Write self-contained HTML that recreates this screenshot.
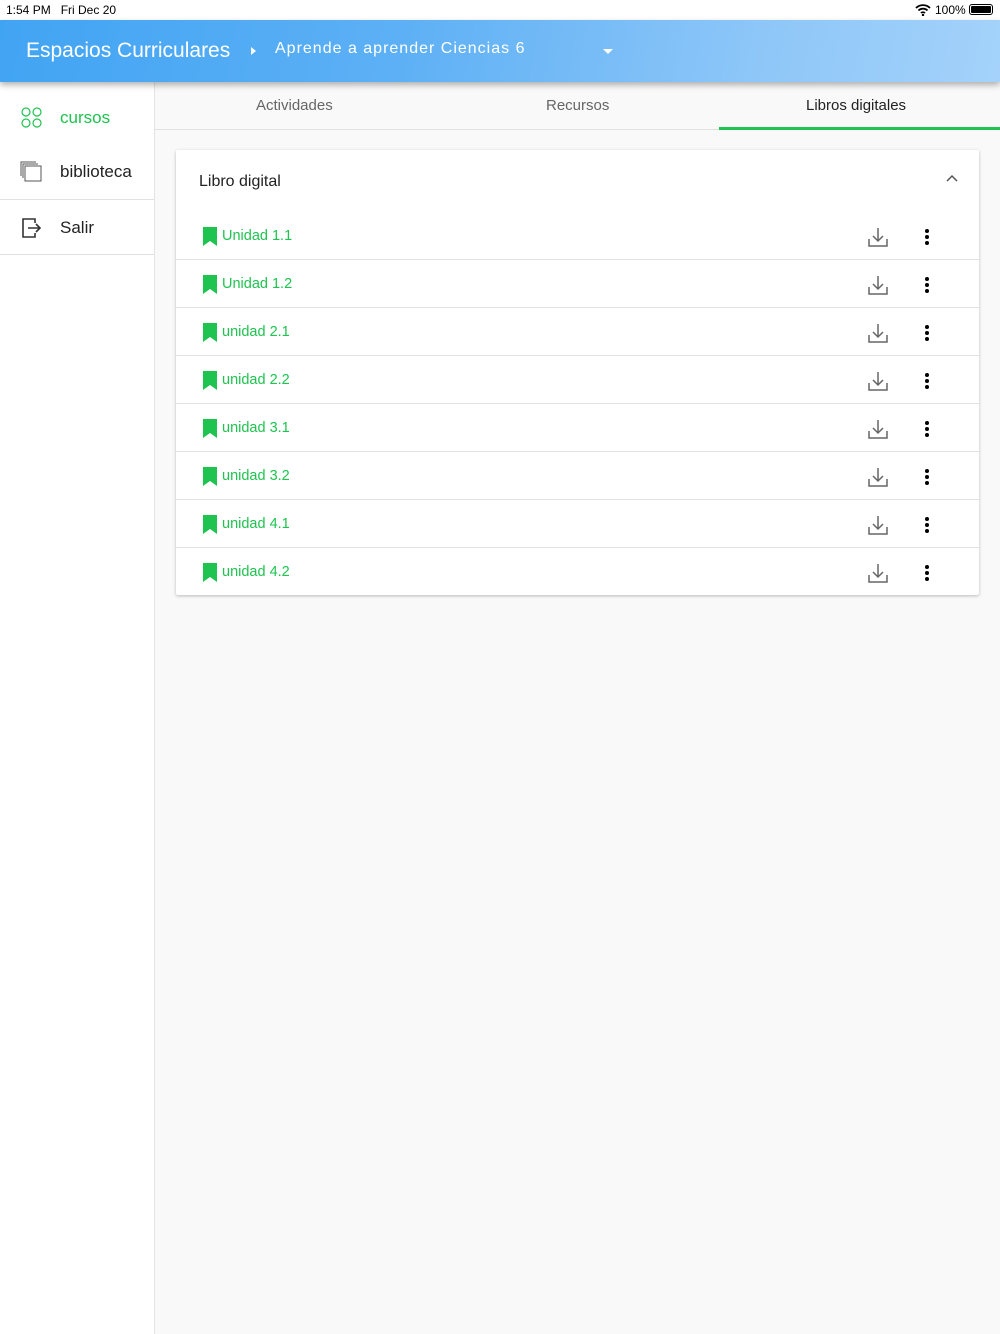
<!DOCTYPE html>
<html><head><meta charset="utf-8"><style>
*{margin:0;padding:0;box-sizing:border-box}
body{width:1000px;height:1334px;background:#f9f9f9;font-family:"Liberation Sans",sans-serif;position:relative;overflow:hidden}
.status{position:absolute;top:0;left:0;width:1000px;height:20px;background:#fff;font-size:12px;color:#000}
.hdr{position:absolute;top:20px;left:0;width:1000px;height:62px;background:linear-gradient(100deg,#41a4f3 0%,#5db0f5 40%,#8dc6f8 75%,#a4d2fa 100%);box-shadow:0 3px 6px rgba(0,0,0,.3);z-index:3;color:#fff}
.side{position:absolute;top:82px;left:0;width:155px;height:1252px;background:#fff;border-right:1px solid #e4e4e4}
.item{position:absolute;left:0;width:154px;height:55px;font-size:17px;color:#222}
.item span{position:absolute;left:60px;top:18px}
.tabs{position:absolute;top:82px;left:155px;width:845px;height:48px;border-bottom:1px solid #e0e0e0;background:#f9f9f9}
.tab{position:absolute;top:15px;font-size:15px;color:#666}
.card{position:absolute;top:150px;left:176px;width:803px;height:445px;background:#fff;box-shadow:0 1px 3px rgba(0,0,0,.25);border-radius:2px}
.row{position:absolute;left:0;width:803px;height:48px;border-bottom:1px solid #e2e2e2}
.row .t{position:absolute;left:46px;top:16px;font-size:14.5px;color:#1ec44f}
.bm{position:absolute;left:27px;top:15px}
.dl{position:absolute;left:692px;top:15px}
.dots{position:absolute;left:748px;top:16px}
</style></head><body>
<div class="status"><span style="position:absolute;left:6px;top:3px">1:54 PM&nbsp;&nbsp;&nbsp;Fri Dec 20</span>
<span style="position:absolute;left:935px;top:3px">100%</span>
<svg style="position:absolute;left:915px;top:4px" width="16" height="12" viewBox="0 0 16 12"><path d="M1 4a10 10 0 0 1 14 0M3.5 6.5a6.5 6.5 0 0 1 9 0M6 9a3 3 0 0 1 4 0" stroke="#000" stroke-width="1.8" fill="none"/><circle cx="8" cy="11" r="1.2"/></svg>
<div style="position:absolute;left:969px;top:4px;width:24px;height:11px;border:1px solid #000;border-radius:3px;padding:1px"><div style="background:#000;width:100%;height:100%;border-radius:1px"></div></div></div>
<div class="hdr">
<span style="position:absolute;left:26px;top:19px;font-size:21px">Espacios Curriculares</span>
<span style="position:absolute;left:251px;top:27px;width:0;height:0;border-top:4px solid transparent;border-bottom:4px solid transparent;border-left:5px solid #fff"></span>
<span style="position:absolute;left:275px;top:20px;font-size:16px;letter-spacing:1px">Aprende a aprender Ciencias 6</span>
<span style="position:absolute;left:603px;top:29px;width:0;height:0;border-left:5px solid transparent;border-right:5px solid transparent;border-top:5px solid #fff"></span>
</div>
<div class="side">
<div class="item" style="top:8px"><svg style="position:absolute;left:21px;top:17px" width="22" height="22"><g fill="none" stroke="#1ec44f" stroke-width="1.2"><circle cx="5" cy="5" r="4"/><circle cx="16" cy="5" r="4"/><circle cx="5" cy="16" r="4"/><circle cx="16" cy="16" r="4"/></g></svg><span style="color:#1ec44f">cursos</span></div>
<div class="item" style="top:62px"><svg style="position:absolute;left:20px;top:16px" width="24" height="24"><g fill="none" stroke="#555" stroke-width="1"><rect x="5" y="6" width="16" height="15"/><path d="M3 18V4h15M1 16V2h15"/></g></svg><span>biblioteca</span></div>
<div class="item" style="top:117px;border-top:1px solid #e2e2e2;border-bottom:1px solid #e2e2e2;height:56px"><svg style="position:absolute;left:21px;top:17px" width="22" height="22"><g fill="none" stroke="#333" stroke-width="1.6"><path d="M14 6V2H2v18h12v-4"/><path d="M7 11h12M15 7l4 4-4 4"/></g></svg><span>Salir</span></div>
</div>
<div class="tabs">
<span class="tab" style="left:101px">Actividades</span>
<span class="tab" style="left:391px">Recursos</span>
<span class="tab" style="left:651px;color:#222">Libros digitales</span>
<div style="position:absolute;left:564px;top:45px;width:281px;height:3px;background:#1ec44f"></div>
</div>
<div class="card">
<span style="position:absolute;left:23px;top:23px;font-size:16px;color:#222">Libro digital</span>
<svg style="position:absolute;left:770px;top:24px" width="12" height="8"><path d="M1 7l5-5 5 5" stroke="#555" stroke-width="1.5" fill="none"/></svg>
</div>
<div class="card" style="background:transparent;box-shadow:none">
<div class="row" style="top:62px"><svg class="bm" width="14" height="19"><path d="M0 0h14v19l-7-5-7 5z" fill="#1ec44f"/></svg><span class="t">Unidad 1.1</span><svg class="dl" width="20" height="20"><g fill="none" stroke="#666" stroke-width="1.5"><path d="M1 12v7h18v-7M10 1v13M5 9l5 5 5-5"/></g></svg><svg class="dots" width="6" height="18"><circle cx="3" cy="3" r="2"/><circle cx="3" cy="9" r="2"/><circle cx="3" cy="15" r="2"/></svg></div>
<div class="row" style="top:110px"><svg class="bm" width="14" height="19"><path d="M0 0h14v19l-7-5-7 5z" fill="#1ec44f"/></svg><span class="t">Unidad 1.2</span><svg class="dl" width="20" height="20"><g fill="none" stroke="#666" stroke-width="1.5"><path d="M1 12v7h18v-7M10 1v13M5 9l5 5 5-5"/></g></svg><svg class="dots" width="6" height="18"><circle cx="3" cy="3" r="2"/><circle cx="3" cy="9" r="2"/><circle cx="3" cy="15" r="2"/></svg></div>
<div class="row" style="top:158px"><svg class="bm" width="14" height="19"><path d="M0 0h14v19l-7-5-7 5z" fill="#1ec44f"/></svg><span class="t">unidad 2.1</span><svg class="dl" width="20" height="20"><g fill="none" stroke="#666" stroke-width="1.5"><path d="M1 12v7h18v-7M10 1v13M5 9l5 5 5-5"/></g></svg><svg class="dots" width="6" height="18"><circle cx="3" cy="3" r="2"/><circle cx="3" cy="9" r="2"/><circle cx="3" cy="15" r="2"/></svg></div>
<div class="row" style="top:206px"><svg class="bm" width="14" height="19"><path d="M0 0h14v19l-7-5-7 5z" fill="#1ec44f"/></svg><span class="t">unidad 2.2</span><svg class="dl" width="20" height="20"><g fill="none" stroke="#666" stroke-width="1.5"><path d="M1 12v7h18v-7M10 1v13M5 9l5 5 5-5"/></g></svg><svg class="dots" width="6" height="18"><circle cx="3" cy="3" r="2"/><circle cx="3" cy="9" r="2"/><circle cx="3" cy="15" r="2"/></svg></div>
<div class="row" style="top:254px"><svg class="bm" width="14" height="19"><path d="M0 0h14v19l-7-5-7 5z" fill="#1ec44f"/></svg><span class="t">unidad 3.1</span><svg class="dl" width="20" height="20"><g fill="none" stroke="#666" stroke-width="1.5"><path d="M1 12v7h18v-7M10 1v13M5 9l5 5 5-5"/></g></svg><svg class="dots" width="6" height="18"><circle cx="3" cy="3" r="2"/><circle cx="3" cy="9" r="2"/><circle cx="3" cy="15" r="2"/></svg></div>
<div class="row" style="top:302px"><svg class="bm" width="14" height="19"><path d="M0 0h14v19l-7-5-7 5z" fill="#1ec44f"/></svg><span class="t">unidad 3.2</span><svg class="dl" width="20" height="20"><g fill="none" stroke="#666" stroke-width="1.5"><path d="M1 12v7h18v-7M10 1v13M5 9l5 5 5-5"/></g></svg><svg class="dots" width="6" height="18"><circle cx="3" cy="3" r="2"/><circle cx="3" cy="9" r="2"/><circle cx="3" cy="15" r="2"/></svg></div>
<div class="row" style="top:350px"><svg class="bm" width="14" height="19"><path d="M0 0h14v19l-7-5-7 5z" fill="#1ec44f"/></svg><span class="t">unidad 4.1</span><svg class="dl" width="20" height="20"><g fill="none" stroke="#666" stroke-width="1.5"><path d="M1 12v7h18v-7M10 1v13M5 9l5 5 5-5"/></g></svg><svg class="dots" width="6" height="18"><circle cx="3" cy="3" r="2"/><circle cx="3" cy="9" r="2"/><circle cx="3" cy="15" r="2"/></svg></div>
<div class="row" style="top:398px;border-bottom:none;height:47px"><svg class="bm" width="14" height="19"><path d="M0 0h14v19l-7-5-7 5z" fill="#1ec44f"/></svg><span class="t">unidad 4.2</span><svg class="dl" width="20" height="20"><g fill="none" stroke="#666" stroke-width="1.5"><path d="M1 12v7h18v-7M10 1v13M5 9l5 5 5-5"/></g></svg><svg class="dots" width="6" height="18"><circle cx="3" cy="3" r="2"/><circle cx="3" cy="9" r="2"/><circle cx="3" cy="15" r="2"/></svg></div>
</div>
</body></html>
